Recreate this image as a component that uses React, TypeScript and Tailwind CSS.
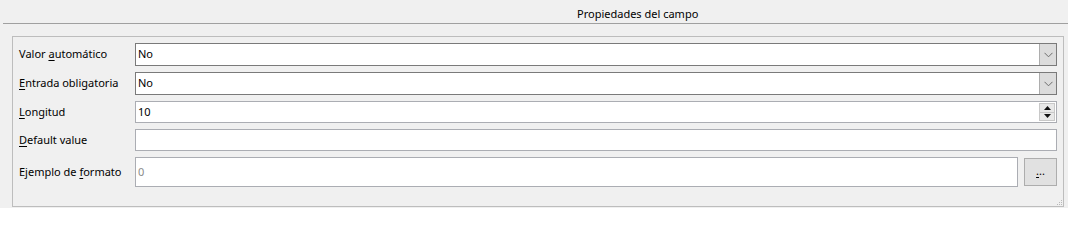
import React from 'react';

const font = { fontFamily: '"Segoe UI", "Noto Sans", "Open Sans", sans-serif' };

const Label: React.FC<{ pre?: string; u: string; post?: string }> = ({ pre = '', u, post = '' }) => (
  <span className="w-[116px] shrink-0 whitespace-nowrap text-[11px] text-black">
    {pre}
    <span className="underline underline-offset-2">{u}</span>
    {post}
  </span>
);

const Chevron = () => (
  <svg width="9" height="6" viewBox="0 0 9 6" className="text-[#6d6d6d]">
    <path d="M0.5 0.8 L4.5 4.8 L8.5 0.8" fill="none" stroke="currentColor" strokeWidth="1" />
  </svg>
);

const Dropdown: React.FC<{ value: string }> = ({ value }) => (
  <div className="flex h-[23px] flex-1 items-stretch border border-[#7a7a7a] bg-white">
    <span className="flex flex-1 items-center pl-[2px] text-[11px] text-black">{value}</span>
    <div className="flex w-[17px] items-center justify-center border-l border-[#adadad] bg-[#dcdcdc]">
      <Chevron />
    </div>
  </div>
);

const App: React.FC = () => {
  return (
    <div className="h-[208px] w-[1068px] overflow-hidden bg-[#f0f0f0]" style={font}>
      {/* header */}
      <div className="h-[23px] pl-[577px] pt-[6px] text-[11px] leading-[15px] text-black">Propiedades del campo</div>
      <div className="ml-[3px] h-px bg-[#a0a0a0]"></div>

      {/* group box */}
      <div className="relative ml-[12px] mr-[4px] mt-[12px] h-[171px] border border-[#bdbdbd] pl-[6px] pr-[6px] pt-[6px]">
        <div className="flex items-center">
          <Label pre="Valor " u="a" post="utomático" />
          <Dropdown value="No" />
        </div>

        <div className="mt-[6px] flex items-center">
          <Label u="E" post="ntrada obligatoria" />
          <Dropdown value="No" />
        </div>

        <div className="mt-[6px] flex items-center">
          <Label u="L" post="ongitud" />
          <div className="flex h-[22px] flex-1 items-stretch border border-[#abadb3] bg-white">
            <span className="flex flex-1 items-center pl-[2px] text-[11px] text-black">10</span>
            <div className="my-[1px] mr-[1px] flex w-[16px] flex-col border border-[#c8c8c8] bg-[#e8e8e8]">
              <div className="flex flex-1 items-center justify-center border-b border-[#c8c8c8]">
                <svg width="7" height="4" viewBox="0 0 7 4"><path d="M3.5 0 L7 4 L0 4 Z" fill="#111" /></svg>
              </div>
              <div className="flex flex-1 items-center justify-center">
                <svg width="7" height="4" viewBox="0 0 7 4"><path d="M0 0 L7 0 L3.5 4 Z" fill="#111" /></svg>
              </div>
            </div>
          </div>
        </div>

        <div className="mt-[6px] flex items-center">
          <Label u="D" post="efault value" />
          <div className="h-[22px] flex-1 border border-[#abadb3] bg-white"></div>
        </div>

        <div className="mt-[6px] flex items-center">
          <Label pre="Ejemplo de " u="f" post="ormato" />
          <div className="flex h-[30px] flex-1 items-center border border-[#abadb3] bg-white pl-[2px] text-[11px] text-[#8a8a8a]">0</div>
          <div className="ml-[6px] flex h-[28px] w-[33px] items-center justify-center border border-[#adadad] bg-[#e1e1e1] text-[11px] leading-none text-black">
            <span className="-mt-[4px]"><span className="underline underline-offset-2">.</span>..</span>
          </div>
        </div>

        {/* size grip */}
        <svg className="absolute bottom-[0px] right-[0px]" width="8" height="8" viewBox="0 0 8 8">
          <rect x="6" y="2" width="1" height="1" fill="#b8b8b8" />
          <rect x="4" y="4" width="1" height="1" fill="#b8b8b8" />
          <rect x="6" y="4" width="1" height="1" fill="#b8b8b8" />
          <rect x="2" y="6" width="1" height="1" fill="#b8b8b8" />
          <rect x="4" y="6" width="1" height="1" fill="#b8b8b8" />
          <rect x="6" y="6" width="1" height="1" fill="#b8b8b8" />
        </svg>
      </div>
    </div>
  );
};

export default App;
